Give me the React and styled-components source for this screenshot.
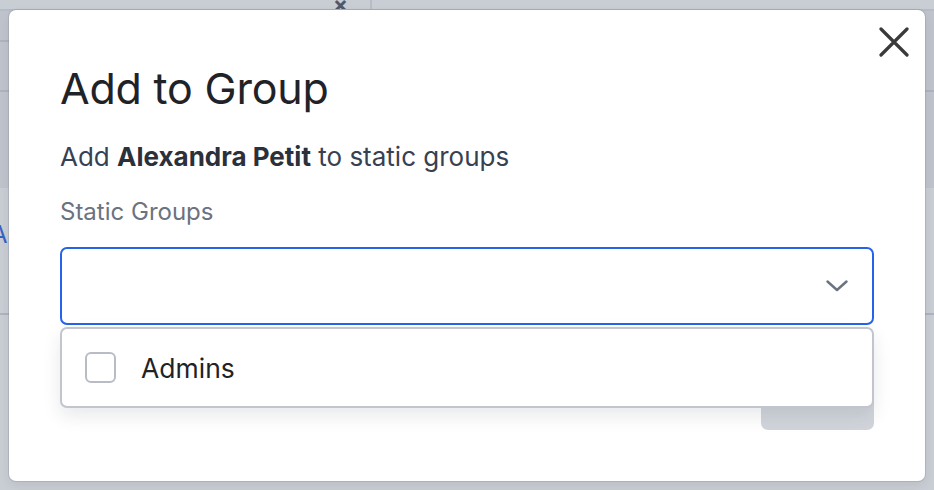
import React from 'react';
import styled, { createGlobalStyle } from 'styled-components';

const GlobalStyle = createGlobalStyle`
  html, body {
    margin: 0;
    padding: 0;
    background: #ffffff;
  }
  body {
    font-family: Inter, "Noto Sans", sans-serif;
    -webkit-font-smoothing: antialiased;
  }
`;

const Page = styled.div`
  position: relative;
  width: 934px;
  height: 490px;
  overflow: hidden;
  background: #ffffff;
`;

const TopBar = styled.div`
  height: 10px;
  display: flex;
  align-items: flex-start;
  padding-left: 333px;
  gap: 22px;
  border-bottom: 1px solid #e3e5e9;
  box-sizing: border-box;
`;

const TopClose = styled.span`
  font-size: 22px;
  line-height: 8px;
  font-weight: 700;
  color: #4b5563;
  height: 9px;
  overflow: hidden;
`;

const TopDivider = styled.span`
  width: 2px;
  height: 10px;
  background: #e5e7eb;
`;

const HeaderBand = styled.div`
  height: 178px;
  background: #f1f2f4;
  border-top: 1px solid #e5e7eb;
  box-sizing: border-box;
`;

const BandLine = styled.div`
  height: 2px;
  background: #d8dbe0;
  margin-top: ${(p) => p.offset}px;
  width: ${(p) => (p.short ? '400px' : 'auto')};
`;

const BodyRows = styled.div`
  padding-top: 32px;
`;

const RowTitle = styled.div`
  font-size: 24px;
  line-height: 30px;
  color: #2563eb;
  margin-left: -9px;
`;

const RowSub = styled.div`
  font-size: 18px;
  line-height: 26px;
  color: #6b7280;
  margin-left: -10px;
  margin-top: 8px;
`;

const RowLine = styled.div`
  height: 2px;
  background: #d8dbe0;
  margin-top: 29px;
`;

const Overlay = styled.div`
  position: absolute;
  inset: 0;
  background: rgba(88, 98, 120, 0.32);
  display: flex;
  padding: 10px 9px 9px 9px;
  box-sizing: border-box;
`;

const Modal = styled.div`
  position: relative;
  flex: 1;
  background: #ffffff;
  border-radius: 7px;
  box-shadow: 0 0 0 1px rgba(120, 128, 145, 0.25), 0 4px 12px rgba(0, 0, 0, 0.08);
  padding: 52px 51px 51px 51px;
  box-sizing: border-box;
  display: flex;
  flex-direction: column;
`;

const CloseButton = styled.button`
  position: absolute;
  top: 16px;
  right: 15px;
  width: 32px;
  height: 32px;
  padding: 0;
  border: none;
  background: transparent;
  display: flex;
  align-items: center;
  justify-content: center;
  cursor: pointer;
`;

const Title = styled.h2`
  margin: 0;
  font-size: 43px;
  line-height: 52px;
  font-weight: 400;
  color: #1f2328;
  letter-spacing: -0.2px;
`;

const Subtitle = styled.p`
  margin: 25px 0 0 0;
  font-size: 26px;
  line-height: 36px;
  color: #374151;

  strong {
    font-weight: 700;
    color: #2b303b;
  }
`;

const Label = styled.label`
  display: block;
  margin-top: 21px;
  font-size: 24px;
  line-height: 32px;
  color: #6b7280;
`;

const Field = styled.div`
  position: relative;
  margin-top: 19px;
`;

const SelectBox = styled.div`
  height: 78px;
  border: 2px solid #2563eb;
  border-radius: 7px;
  box-sizing: border-box;
  display: flex;
  align-items: center;
  justify-content: flex-end;
  padding-right: 24px;
`;

const Menu = styled.div`
  position: absolute;
  left: 0;
  right: 0;
  top: calc(100% + 2px);
  height: 81px;
  box-sizing: border-box;
  background: #ffffff;
  border: 2px solid #c2c5cd;
  border-radius: 7px;
  box-shadow: 0 8px 18px rgba(30, 40, 60, 0.1);
  display: flex;
  align-items: center;
  padding-left: 23px;
  gap: 25px;
  z-index: 2;
`;

const Checkbox = styled.span`
  width: 31px;
  height: 31px;
  box-sizing: border-box;
  border: 2px solid #b8bcc5;
  border-radius: 6px;
  background: #ffffff;
`;

const OptionText = styled.span`
  font-size: 26.5px;
  line-height: 32px;
  color: #1f2328;
`;

const Footer = styled.div`
  display: flex;
  justify-content: flex-end;
  margin-top: auto;
`;

const SubmitButton = styled.button`
  width: 113px;
  height: 70px;
  padding: 0 0 6px 0;
  border: none;
  border-radius: 7px;
  background: #d1d5db;
  color: #ffffff;
  font-family: inherit;
  font-size: 22px;
  line-height: 24px;
`;

function Chevron() {
  return (
    <svg width="22" height="12" viewBox="0 0 22 12" fill="none">
      <path d="M1.5 1.5 L11 10 L20.5 1.5" stroke="#6b7280" strokeWidth="2.4" strokeLinecap="round" strokeLinejoin="round" />
    </svg>
  );
}

function CloseIcon() {
  return (
    <svg width="30" height="30" viewBox="0 0 30 30" fill="none">
      <path d="M2 2 L28 28 M28 2 L2 28" stroke="#3a3a3a" strokeWidth="3.2" strokeLinecap="round" />
    </svg>
  );
}

export default function App() {
  return (
    <Page>
      <GlobalStyle />
      <TopBar>
        <TopClose>×</TopClose>
        <TopDivider />
      </TopBar>
      <HeaderBand>
        <BandLine offset={29} short />
        <BandLine offset={48} />
      </HeaderBand>
      <BodyRows>
        <RowTitle>A</RowTitle>
        <RowSub>a</RowSub>
        <RowLine />
      </BodyRows>
      <Overlay>
        <Modal role="dialog" aria-labelledby="add-group-title">
          <CloseButton aria-label="Close">
            <CloseIcon />
          </CloseButton>
          <Title id="add-group-title">Add to Group</Title>
          <Subtitle>
            Add <strong>Alexandra Petit</strong> to static groups
          </Subtitle>
          <Label>Static Groups</Label>
          <Field>
            <SelectBox>
              <Chevron />
            </SelectBox>
            <Menu>
              <Checkbox />
              <OptionText>Admins</OptionText>
            </Menu>
          </Field>
          <Footer>
            <SubmitButton disabled>Add</SubmitButton>
          </Footer>
        </Modal>
      </Overlay>
    </Page>
  );
}
